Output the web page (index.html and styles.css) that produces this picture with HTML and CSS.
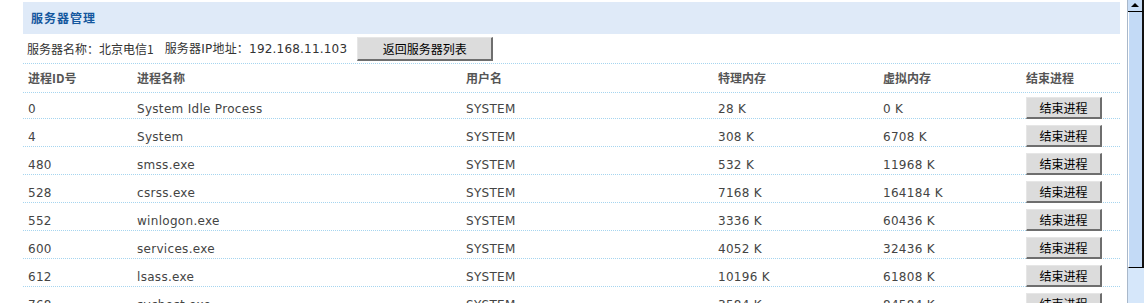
FILE: index.html
```html
<!DOCTYPE html>
<html lang="zh-CN">
<head>
<meta charset="utf-8">
<title>服务器管理</title>
<link rel="stylesheet" href="styles.css">
</head>
<body>
<div class="page">
  <main class="panel">
    <div class="titlebar"><h1 class="title">服务器管理</h1></div>
    <div class="info">
      <span class="info-name">服务器名称：北京电信1</span>
      <span class="info-ip">服务器IP地址：192.168.11.103</span>
      <button class="btn btn-back" type="button">返回服务器列表</button>
    </div>
    <div class="table">
      <div class="row head">
        <div class="cell">进程ID号</div>
        <div class="cell">进程名称</div>
        <div class="cell">用户名</div>
        <div class="cell">特理内存</div>
        <div class="cell">虚拟内存</div>
        <div class="cell">结束进程</div>
      </div>
      <div class="row first">
        <div class="cell">0</div><div class="cell">System Idle Process</div><div class="cell">SYSTEM</div><div class="cell">28 K</div><div class="cell">0 K</div>
        <div class="cell cell-btn"><button class="btn btn-kill" type="button">结束进程</button></div>
      </div>
      <div class="row">
        <div class="cell">4</div><div class="cell">System</div><div class="cell">SYSTEM</div><div class="cell">308 K</div><div class="cell">6708 K</div>
        <div class="cell cell-btn"><button class="btn btn-kill" type="button">结束进程</button></div>
      </div>
      <div class="row">
        <div class="cell">480</div><div class="cell">smss.exe</div><div class="cell">SYSTEM</div><div class="cell">532 K</div><div class="cell">11968 K</div>
        <div class="cell cell-btn"><button class="btn btn-kill" type="button">结束进程</button></div>
      </div>
      <div class="row">
        <div class="cell">528</div><div class="cell">csrss.exe</div><div class="cell">SYSTEM</div><div class="cell">7168 K</div><div class="cell">164184 K</div>
        <div class="cell cell-btn"><button class="btn btn-kill" type="button">结束进程</button></div>
      </div>
      <div class="row">
        <div class="cell">552</div><div class="cell">winlogon.exe</div><div class="cell">SYSTEM</div><div class="cell">3336 K</div><div class="cell">60436 K</div>
        <div class="cell cell-btn"><button class="btn btn-kill" type="button">结束进程</button></div>
      </div>
      <div class="row">
        <div class="cell">600</div><div class="cell">services.exe</div><div class="cell">SYSTEM</div><div class="cell">4052 K</div><div class="cell">32436 K</div>
        <div class="cell cell-btn"><button class="btn btn-kill" type="button">结束进程</button></div>
      </div>
      <div class="row">
        <div class="cell">612</div><div class="cell">lsass.exe</div><div class="cell">SYSTEM</div><div class="cell">10196 K</div><div class="cell">61808 K</div>
        <div class="cell cell-btn"><button class="btn btn-kill" type="button">结束进程</button></div>
      </div>
      <div class="row">
        <div class="cell">768</div><div class="cell">svchost.exe</div><div class="cell">SYSTEM</div><div class="cell">3584 K</div><div class="cell">84584 K</div>
        <div class="cell cell-btn"><button class="btn btn-kill" type="button">结束进程</button></div>
      </div>
    </div>
  </main>
  <div class="scrollbar" aria-hidden="true">
    <div class="sb-up"><span class="sb-arrow"></span></div>
    <div class="sb-thumb"></div>
    <div class="sb-track"></div>
  </div>
</div>
</body>
</html>
```

FILE: styles.css
```css
html, body {
  margin: 0;
  padding: 0;
  height: 303px;
  overflow: hidden;
  background: #ffffff;
}

body {
  font-family: "DejaVu Sans", "Noto Sans CJK SC", sans-serif;
  font-size: 12px;
  line-height: 1;
  color: #444444;
}

.page {
  display: flex;
  height: 303px;
}

.panel {
  flex: none;
  width: 1097px;
  margin: 2px 0 0 23px;
}

/* title band */
.titlebar {
  height: 32px;
  background: #dfeaf8;
  display: flex;
  align-items: center;
  padding-left: 8px;
}

.title {
  margin: 0;
  font-family: "Noto Sans CJK SC", sans-serif;
  font-size: 12px;
  font-weight: bold;
  letter-spacing: 1px;
  color: #14579e;
  line-height: 14px;
}

/* info row */
.info {
  height: 28px;
  padding-top: 1px;
  border-bottom: 1px dotted #a6d5ef;
  display: flex;
  align-items: center;
  padding-left: 4px;
  color: #333333;
}

.info-name {
  font-family: "Noto Sans CJK SC", sans-serif;
}

.info-ip {
  margin-left: 11px;
  letter-spacing: 0.2px;
}

.btn {
  font-family: "Noto Sans CJK SC", sans-serif;
  font-size: 12px;
  color: #000000;
  background: #dcdcdc;
  border-style: solid;
  border-width: 1px 2px 2px 1px;
  border-color: #e6e6e6 #6e6e6e #6e6e6e #e6e6e6;
  padding: 0;
  margin: 0;
  line-height: 1;
  cursor: pointer;
}

.btn-back {
  width: 136px;
  height: 24px;
  margin-left: 10px;
}

/* table */
.row {
  display: grid;
  grid-template-columns: 109px 329px 252px 165px 143px 99px;
  height: 27px;
  border-bottom: 1px dotted #a6d5ef;
  align-items: end;
}

.row.first {
  height: 25px;
}

.row.head {
  height: 28px;
  align-items: center;
}

.cell {
  padding-left: 5px;
  line-height: 17px;
  white-space: nowrap;
  letter-spacing: 0.3px;
}

.head .cell {
  font-family: "Noto Sans CJK SC", sans-serif;
  font-weight: bold;
  color: #555555;
  line-height: 18px;
  letter-spacing: 0;
}

.cell-btn {
  display: flex;
  align-self: end;
  margin-bottom: -1px;
  letter-spacing: 0;
}

.btn-kill {
  width: 76px;
  height: 22px;
}

/* scrollbar */
.scrollbar {
  flex: none;
  width: 16px;
  margin-left: 7px;
  border-left: 1px solid #a9b8ca;
  display: flex;
  flex-direction: column;
  background: #d6e7fa;
}

.sb-up {
  height: 12px;
  background: #c8ddf6;
  border-bottom: 1px solid #000000;
  border-right: 2px solid #111111;
  display: flex;
  justify-content: center;
  padding-top: 3px;
  box-sizing: border-box;
}

.sb-arrow {
  width: 0;
  height: 0;
  border-left: 4px solid transparent;
  border-right: 4px solid transparent;
  border-bottom: 4px solid #000000;
}

.sb-thumb {
  height: 255px;
  background: #c3daf6;
  border-left: 1px solid #ffffff;
  border-right: 2px solid #111111;
  border-bottom: 1px solid #000000;
}

.sb-track {
  flex: 1;
  background: #d6e7fa;
}
```
